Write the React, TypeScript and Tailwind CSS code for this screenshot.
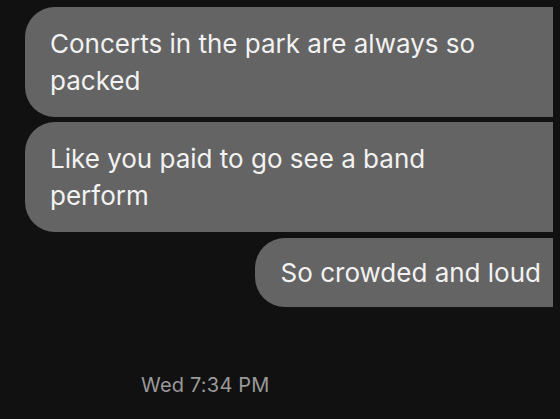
const messages = [
  { id: 1, text: 'Concerts in the park are always so packed', wide: true },
  { id: 2, text: 'Like you paid to go see a band perform', wide: true },
];

const Bubble = ({ text, className = '' }: { text: string; className?: string }) => (
  <div
    className={`bg-[#646464] text-[#f2f2f2] text-[26px] leading-[37px] rounded-l-[30px] ${className}`}
  >
    {text}
  </div>
);

export default function App() {
  return (
    <div
      className="w-[560px] h-[419px] bg-[#111111] overflow-hidden flex flex-col"
      style={{ fontFamily: 'Inter, "Liberation Sans", sans-serif' }}
    >
      <div className="flex flex-col gap-[5px] pt-[7px] pl-[25px] pr-[7px]">
        {messages.map((m) => (
          <Bubble key={m.id} text={m.text} className="pl-[25px] pr-[40px] py-[18px]" />
        ))}
        <div className="flex justify-end mt-[1px]">
          <Bubble text="So crowded and loud" className="pl-[26px] pr-[12px] py-[16px] rounded-r-none" />
        </div>
      </div>
      <div className="pl-[141px] mt-[63px] text-[20px] text-[#9a9a9a] tracking-[0.2px]">
        Wed 7:34 PM
      </div>
    </div>
  );
}
